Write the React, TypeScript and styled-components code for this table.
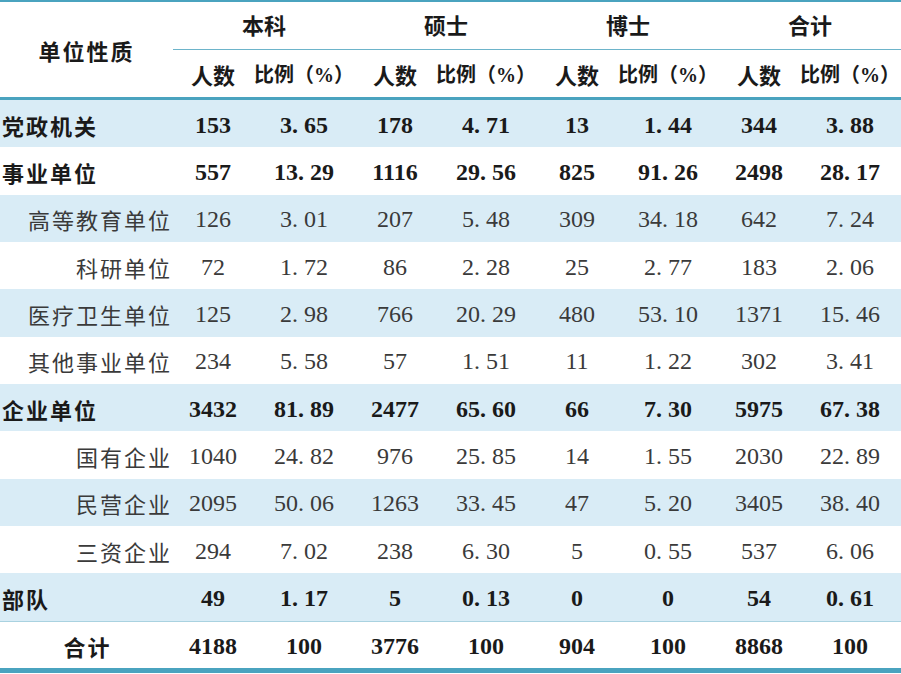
import React from 'react';
import styled, { createGlobalStyle } from 'styled-components';

const GlobalStyle = createGlobalStyle`
  html, body {
    margin: 0;
    padding: 0;
    background: #ffffff;
  }
`;

type RowKind = 'main' | 'sub' | 'total';

interface DataRow {
  label: string;
  kind: RowKind;
  values: string[];
}

const groups = ['本科', '硕士', '博士', '合计'];

const rows: DataRow[] = [
  { label: '党政机关', kind: 'main', values: ['153', '3.65', '178', '4.71', '13', '1.44', '344', '3.88'] },
  { label: '事业单位', kind: 'main', values: ['557', '13.29', '1116', '29.56', '825', '91.26', '2498', '28.17'] },
  { label: '高等教育单位', kind: 'sub', values: ['126', '3.01', '207', '5.48', '309', '34.18', '642', '7.24'] },
  { label: '科研单位', kind: 'sub', values: ['72', '1.72', '86', '2.28', '25', '2.77', '183', '2.06'] },
  { label: '医疗卫生单位', kind: 'sub', values: ['125', '2.98', '766', '20.29', '480', '53.10', '1371', '15.46'] },
  { label: '其他事业单位', kind: 'sub', values: ['234', '5.58', '57', '1.51', '11', '1.22', '302', '3.41'] },
  { label: '企业单位', kind: 'main', values: ['3432', '81.89', '2477', '65.60', '66', '7.30', '5975', '67.38'] },
  { label: '国有企业', kind: 'sub', values: ['1040', '24.82', '976', '25.85', '14', '1.55', '2030', '22.89'] },
  { label: '民营企业', kind: 'sub', values: ['2095', '50.06', '1263', '33.45', '47', '5.20', '3405', '38.40'] },
  { label: '三资企业', kind: 'sub', values: ['294', '7.02', '238', '6.30', '5', '0.55', '537', '6.06'] },
  { label: '部队', kind: 'main', values: ['49', '1.17', '5', '0.13', '0', '0', '54', '0.61'] },
  { label: '合计', kind: 'total', values: ['4188', '100', '3776', '100', '904', '100', '8868', '100'] },
];

const TEAL = '#4aa3bf';

const Table = styled.table`
  width: 901px;
  table-layout: fixed;
  border-collapse: separate;
  border-spacing: 0;
  border-top: 2px solid ${TEAL};
  border-bottom: 5px solid ${TEAL};
  font-family: 'Liberation Serif', 'Noto Sans CJK SC', serif;
  color: #1a1a1a;
`;

const CornerCell = styled.th`
  height: 47px;
  padding: 0;
  border-bottom: 3px solid ${TEAL};
  font-family: 'Noto Sans CJK SC', sans-serif;
  font-size: 22px;
  font-weight: 700;
  letter-spacing: 2px;
  text-align: center;
  vertical-align: middle;
`;

const GroupCell = styled.th`
  height: 43px;
  padding: 0 0 4px 0;
  border-bottom: 1px solid #6db4ca;
  font-family: 'Noto Sans CJK SC', sans-serif;
  font-size: 22px;
  font-weight: 700;
  text-align: center;
  vertical-align: middle;
`;

const SubHeadCell = styled.th<{ $narrow?: boolean }>`
  height: 47px;
  padding: 0;
  border-bottom: 3px solid ${TEAL};
  font-family: 'Liberation Serif', 'Noto Sans CJK SC', serif;
  font-size: ${(p) => (p.$narrow ? '20px' : '22px')};
  font-weight: 700;
  text-align: center;
  vertical-align: middle;
  white-space: nowrap;
`;

const Row = styled.tr<{ $shaded: boolean }>`
  height: 47.33px;
  background: ${(p) => (p.$shaded ? '#d9ecf6' : '#ffffff')};
`;

const LabelCell = styled.td<{ $kind: RowKind }>`
  padding: ${(p) => (p.$kind === 'sub' ? '2px 1px 0 0' : '2px 0 0 2px')};
  border-top: ${(p) => (p.$kind === 'total' ? '1px solid #a9d2e0' : 'none')};
  font-family: 'Noto Sans CJK SC', sans-serif;
  font-size: 22px;
  font-weight: ${(p) => (p.$kind === 'sub' ? 400 : 700)};
  color: ${(p) => (p.$kind === 'sub' ? '#3a3a3a' : '#1a1a1a')};
  letter-spacing: 2px;
  white-space: nowrap;
  text-align: ${(p) => (p.$kind === 'sub' ? 'right' : p.$kind === 'total' ? 'center' : 'left')};
  vertical-align: middle;
`;

const NumCell = styled.td<{ $kind: RowKind }>`
  padding: 3px 0 0 0;
  border-top: ${(p) => (p.$kind === 'total' ? '1px solid #a9d2e0' : 'none')};
  font-size: 24px;
  font-weight: ${(p) => (p.$kind === 'sub' ? 400 : 700)};
  color: ${(p) => (p.$kind === 'sub' ? '#3a3a3a' : '#1a1a1a')};
  text-align: center;
  vertical-align: middle;
  white-space: nowrap;
`;

const Dot = styled.span`
  padding-right: 0.25em;
`;

const Num = ({ value }: { value: string }) => {
  const [int, frac] = value.split('.');
  if (frac === undefined) return <>{int}</>;
  return (
    <>
      {int}
      <Dot>.</Dot>
      {frac}
    </>
  );
};

const App = () => {
  return (
    <>
      <GlobalStyle />
      <Table>
        <colgroup>
          <col style={{ width: 173 }} />
          {groups.map((g) => (
            <React.Fragment key={g}>
              <col style={{ width: 80 }} />
              <col style={{ width: 102 }} />
            </React.Fragment>
          ))}
        </colgroup>
        <thead>
          <tr>
            <CornerCell rowSpan={2}>单位性质</CornerCell>
            {groups.map((g) => (
              <GroupCell key={g} colSpan={2}>
                {g}
              </GroupCell>
            ))}
          </tr>
          <tr>
            {groups.map((g) => (
              <React.Fragment key={g}>
                <SubHeadCell>人数</SubHeadCell>
                <SubHeadCell $narrow>比例（%）</SubHeadCell>
              </React.Fragment>
            ))}
          </tr>
        </thead>
        <tbody>
          {rows.map((row, i) => (
            <Row key={row.label + i} $shaded={i % 2 === 0}>
              <LabelCell $kind={row.kind}>{row.label}</LabelCell>
              {row.values.map((v, j) => (
                <NumCell key={j} $kind={row.kind}>
                  <Num value={v} />
                </NumCell>
              ))}
            </Row>
          ))}
        </tbody>
      </Table>
    </>
  );
};

export default App;
